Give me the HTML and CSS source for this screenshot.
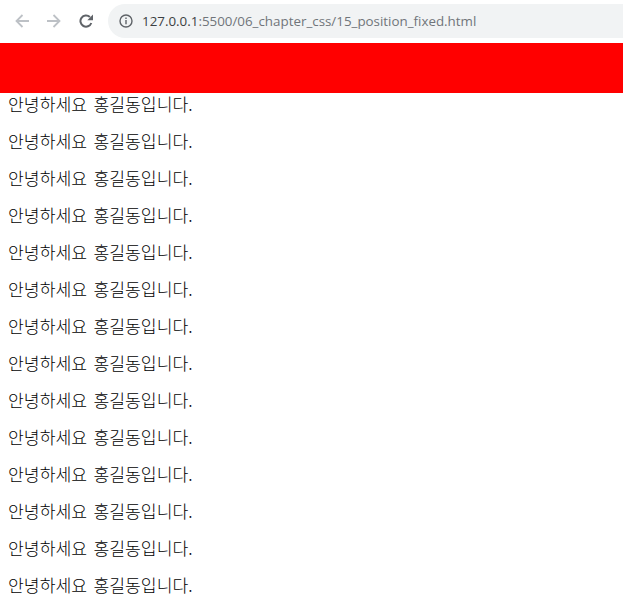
FILE: index.html
```html
<!DOCTYPE html>
<html lang="ko">
<head>
<meta charset="utf-8">
<title>15_position_fixed</title>
<link rel="stylesheet" href="styles.css">
</head>
<body>
<header class="toolbar">
  <svg class="nav-icon back" viewBox="0 0 14 14"><path d="M14 7H1.5M7.5 1 1.5 7l6 6" /></svg>
  <svg class="nav-icon forward" viewBox="0 0 14 14"><path d="M0 7h12.5M6.5 1l6 6-6 6" /></svg>
  <svg class="reload" viewBox="0 0 14 14"><path class="reload-arc" d="M12.3 9A5.6 5.6 0 1 1 10.9 3" /><path class="reload-head" d="M14 .5V6.2H8.3z" /></svg>
  <div class="omnibox">
    <svg class="info" viewBox="0 0 14 14"><circle cx="7" cy="7" r="6" /><path d="M7 6v4.2M7 3.4v1.5" /></svg>
    <span class="url"><span class="host">127.0.0.1</span>:5500/06_chapter_css/15_position_fixed.html</span>
  </div>
</header>
<div class="red-bar"></div>
<main class="content">
  <p>안녕하세요 홍길동입니다.</p>
  <p>안녕하세요 홍길동입니다.</p>
  <p>안녕하세요 홍길동입니다.</p>
  <p>안녕하세요 홍길동입니다.</p>
  <p>안녕하세요 홍길동입니다.</p>
  <p>안녕하세요 홍길동입니다.</p>
  <p>안녕하세요 홍길동입니다.</p>
  <p>안녕하세요 홍길동입니다.</p>
  <p>안녕하세요 홍길동입니다.</p>
  <p>안녕하세요 홍길동입니다.</p>
  <p>안녕하세요 홍길동입니다.</p>
  <p>안녕하세요 홍길동입니다.</p>
  <p>안녕하세요 홍길동입니다.</p>
  <p>안녕하세요 홍길동입니다.</p>
</main>
</body>
</html>
```
FILE: styles.css
```css
html, body { margin: 0; height: 100%; overflow: hidden; background: #fff; }
body { font-family: "Noto Sans CJK KR", "Liberation Sans", sans-serif; color: #000; }
.toolbar { height: 43px; display: flex; align-items: flex-start; box-sizing: border-box; padding: 4px 0 0 15px; background: #fff; }
.nav-icon { width: 14px; height: 14px; margin-top: 10px; fill: none; stroke: #bdc1c6; stroke-width: 1.8; }
.forward { margin-left: 18px; }
.reload { width: 14px; height: 14px; margin: 10px 0 0 18px; }
.reload-arc { fill: none; stroke: #5f6368; stroke-width: 2; }
.reload-head { fill: #5f6368; }
.omnibox { flex: 1; height: 34px; margin-left: 15px; display: flex; align-items: center; background: #f1f3f4; border-radius: 17px 0 0 17px; padding-left: 11px; }
.info { width: 14px; height: 14px; fill: none; stroke: #5f6368; stroke-width: 1.4; }
.url { margin-left: 9px; font: 13.36px "Open Sans", "Liberation Sans", sans-serif; color: #70757a; white-space: nowrap; }
.host { color: #3c4043; }
.red-bar { height: 50px; background: #f00; }
.content { padding: 1px 8px 0; }
.content p { margin: 0 0 17px; font-size: 17.2px; word-spacing: 1.5px; line-height: 20px; white-space: nowrap; font-weight: 300; color: #000; }
```
